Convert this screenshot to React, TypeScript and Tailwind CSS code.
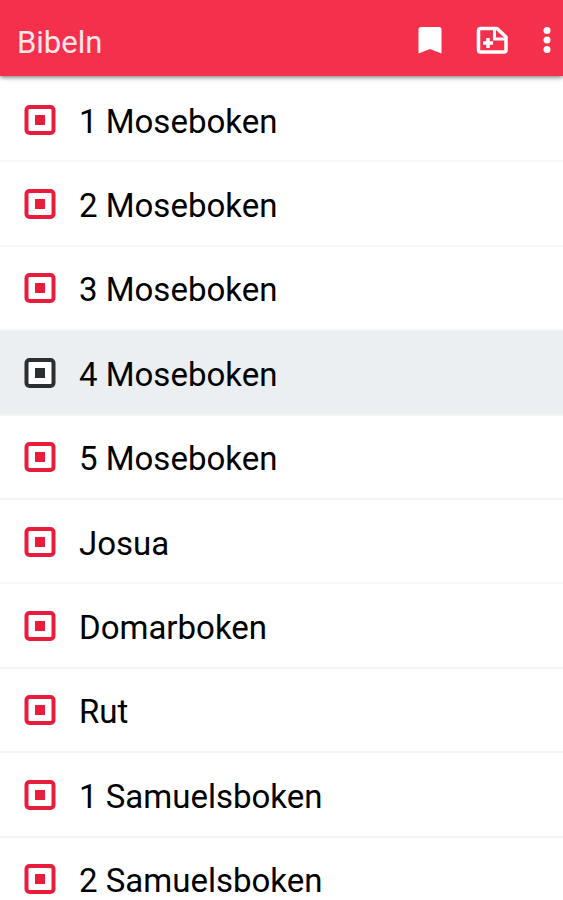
const books = [
  "1 Moseboken",
  "2 Moseboken",
  "3 Moseboken",
  "4 Moseboken",
  "5 Moseboken",
  "Josua",
  "Domarboken",
  "Rut",
  "1 Samuelsboken",
  "2 Samuelsboken",
];

const selectedBook = "4 Moseboken";

function BookIcon({ selected }: { selected: boolean }) {
  return (
    <svg
      viewBox="0 0 32 30"
      aria-hidden="true"
      className={`h-[30px] w-8 shrink-0 ${selected ? "text-[#2b2f31]" : "text-[#ea1c3c]"}`}
    >
      <rect x="2.500" y="2" width="27" height="26" rx="3" fill="white" stroke="currentColor" strokeWidth="4" />
      <rect x="11" y="10" width="10" height="10" fill="currentColor" />
    </svg>
  );
}

function BookmarkIcon() {
  return (
    <svg viewBox="0 0 24 28" aria-hidden="true" className="h-7 w-6 fill-current">
      <path d="M3 1h18a2.500 2.500 0 0 1 2.500 2.500V27.500L12 23 0.500 27.500V3.500A2.500 2.500 0 0 1 3 1z" />
    </svg>
  );
}

function AddNoteIcon() {
  return (
    <svg viewBox="0 0 32 28" aria-hidden="true" className="h-7 w-8 fill-none stroke-current">
      <path d="M4.500 2.500H21L30 11v13a2 2 0 0 1-2 2H4.500a2 2 0 0 1-2-2V4.500a2 2 0 0 1 2-2z" strokeWidth="3.500" strokeLinejoin="round" />
      <path d="M18.500 2.500v10.500H30" strokeWidth="3" />
      <path d="M12 12v10M7 17h10" strokeWidth="3.500" />
    </svg>
  );
}

function MoreIcon() {
  return (
    <svg viewBox="0 0 8 26" aria-hidden="true" className="h-[26px] w-2 fill-current">
      <circle cx="4" cy="3.500" r="3.500" />
      <circle cx="4" cy="13" r="3.500" />
      <circle cx="4" cy="22.500" r="3.500" />
    </svg>
  );
}

export default function App() {
  return (
    <div className="h-screen overflow-hidden bg-white font-['Roboto',sans-serif]">
      <header className="relative flex h-[76px] items-center justify-between bg-[#f5304c] pt-1 pr-3 pl-[17px] text-white shadow-[0_1px_5px_rgba(0,0,0,0.6)]">
        <h1 className="pt-[6px] text-[31px] leading-9 font-normal text-[#ffe6ea]">Bibeln</h1>
        <div className="flex items-center">
          <button type="button" aria-label="Bokmärken" className="mr-[34px]">
            <BookmarkIcon />
          </button>
          <button type="button" aria-label="Ny anteckning" className="mr-[35px]">
            <AddNoteIcon />
          </button>
          <button type="button" aria-label="Mer">
            <MoreIcon />
          </button>
        </div>
      </header>
      <ul className="grid min-h-[846px] auto-rows-fr pt-[2px]">
        {books.map((book) => {
          const selected = book === selectedBook;
          return (
            <li key={book} className={`border-b-2 border-[#f4f5f5] ${selected ? "bg-[#ebeff1]" : ""}`}>
              <button type="button" className="flex h-full w-full items-center gap-[23px] px-6 pt-px text-left">
                <BookIcon selected={selected} />
                <span className="pt-1 text-[33px] leading-10 text-black">{book}</span>
              </button>
            </li>
          );
        })}
      </ul>
    </div>
  );
}
